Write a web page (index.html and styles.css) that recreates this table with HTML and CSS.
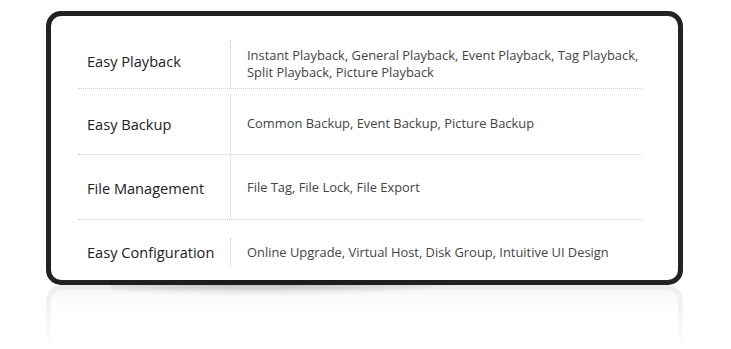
FILE: index.html
```html
<!DOCTYPE html>
<html>
<head>
<meta charset="utf-8">
<title>Features</title>
<link rel="stylesheet" href="styles.css">
</head>
<body>
<div class="stage">
	<div class="card">
		<div class="feats">
			<div class="row r1">
				<div class="name">Easy Playback</div>
				<div class="desc">Instant Playback, General Playback, Event Playback, Tag Playback,<br>Split Playback, Picture Playback</div>
			</div>
			<div class="row r2">
				<div class="name">Easy Backup</div>
				<div class="desc">Common Backup, Event Backup, Picture Backup</div>
			</div>
			<div class="row r3">
				<div class="name">File Management</div>
				<div class="desc">File Tag, File Lock, File Export</div>
			</div>
			<div class="row r4">
				<div class="name">Easy Configuration</div>
				<div class="desc">Online Upgrade, Virtual Host, Disk Group, Intuitive UI Design</div>
			</div>
		</div>
	</div>
	<div class="mirror"></div>
</div>
</body>
</html>
```

FILE: styles.css
```css
body {
	margin: 0;
	background: #fff;
	font-family: "Open Sans", "Noto Sans", sans-serif;
}

.stage {
	width: 637px;
	margin: 11px 0 0 46px;
	position: relative;
}

.card {
	box-sizing: border-box;
	height: 274px;
	border: 5px solid #222;
	border-radius: 15px;
	background: #fff;
	padding: 24px 36px 0 27px;
	position: relative;
	z-index: 1;
}

/* soft shadow under the bottom edge */
.card::after {
	content: "";
	position: absolute;
	left: 60px;
	right: 200px;
	bottom: -16px;
	height: 16px;
	background: radial-gradient(ellipse at 40% 0, rgba(0,0,0,0.25), rgba(0,0,0,0) 70%);
}

/* faded reflection of the frame */
.mirror {
	box-sizing: border-box;
	height: 64px;
	border: 5px solid #e8e8e8;
	border-bottom: 0;
	border-radius: 15px 15px 0 0;
	background: linear-gradient(#f4f4f4, #fff 40%);
	-webkit-mask-image: linear-gradient(rgba(0,0,0,0.8), rgba(0,0,0,0));
	mask-image: linear-gradient(rgba(0,0,0,0.8), rgba(0,0,0,0));
}

.row {
	display: flex;
	box-sizing: border-box;
	border-bottom: 1px dotted #cfcfcf;
}
.r1 { height: 49px; }
.r2 { height: 66px; padding-top: 4px; }
.r3 { height: 65px; padding-top: 1px; }
.r4 { height: 46px; padding-top: 18px; border-bottom: 0; }

.name {
	width: 153px;
	flex-shrink: 0;
	box-sizing: border-box;
	padding-left: 9px;
	border-right: 1px dotted #cfcfcf;
	display: flex;
	align-items: center;
	font-size: 14.6px;
	color: #222;
}
.r1 .name { padding-bottom: 6px; }

.desc {
	padding-left: 16px;
	display: flex;
	align-items: center;
	font-size: 12.9px;
	line-height: 17px;
	color: #444;
}
```
